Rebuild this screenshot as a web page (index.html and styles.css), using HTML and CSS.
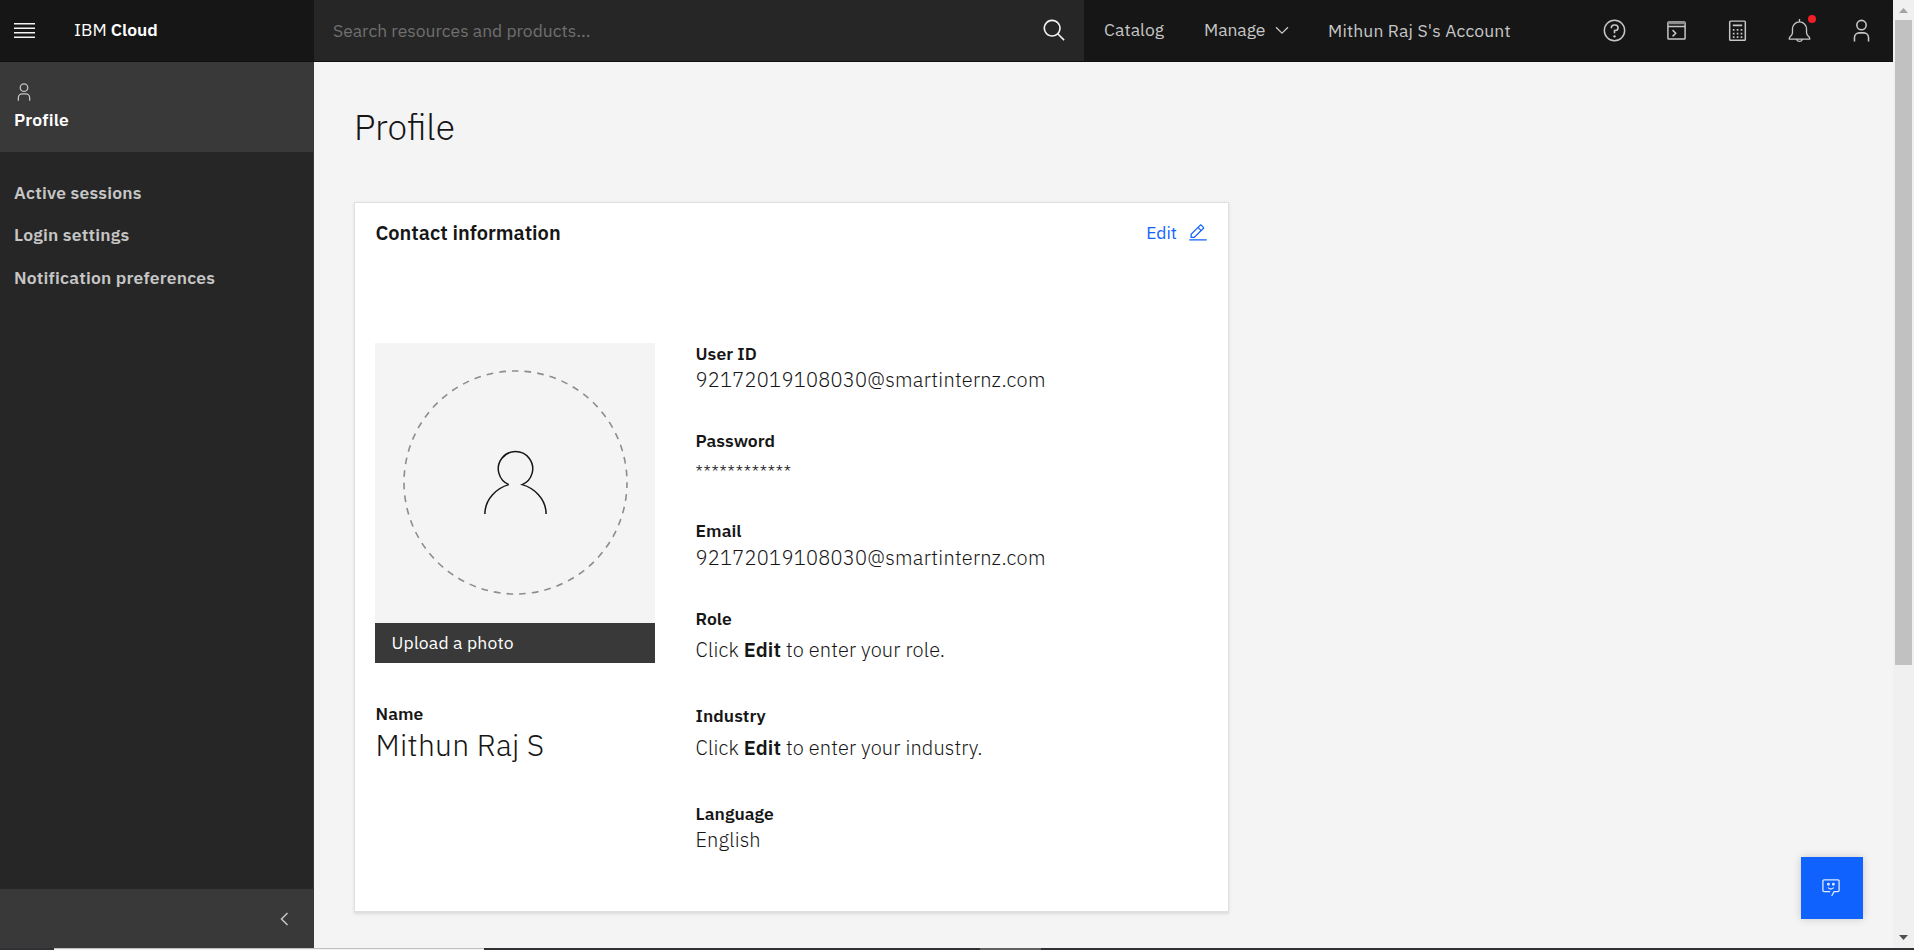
FILE: index.html
```html
<!DOCTYPE html>
<html lang="en">
<head>
<meta charset="utf-8">
<title>Profile - IBM Cloud</title>
<link rel="stylesheet" href="styles.css">
</head>
<body>
<div class="window">
  <div class="app">
    <header class="topbar">
      <div class="brand">
        <svg class="menu-icon" width="21" height="15" viewBox="0 0 21 15"><path d="M0 .75h21M0 5.25h21M0 9.75h21M0 14.25h21"/></svg>
        <span class="brand-name">IBM <b>Cloud</b></span>
      </div>
      <div class="search">
        <span class="search-text">Search resources and products...</span>
        <svg class="icon icon-search" width="25" height="25" viewBox="0 0 32 32"><path d="M29 27.586l-7.552-7.552a11.018 11.018 0 1 0-1.414 1.414L27.586 29zM4 13a9 9 0 1 1 9 9 9.01 9.01 0 0 1-9-9z"/></svg>
      </div>
      <nav class="top-links">
        <a class="link-catalog">Catalog</a>
        <a class="link-manage">Manage <svg class="chevron" width="14" height="9" viewBox="0 0 14 9"><path d="M1 1.2l6 6 6-6"/></svg></a>
        <a class="link-account">Mithun Raj S's Account</a>
      </nav>
      <div class="top-icons">
        <span class="top-cell"><svg class="icon" width="25" height="25" viewBox="0 0 32 32"><circle class="line" cx="16" cy="16" r="13"/><path d="M17 8h-1.500A4.490 4.490 0 0 0 11 12.500V13h2v-.5A2.500 2.500 0 0 1 15.500 10H17a2.500 2.500 0 0 1 0 5h-2v4.500h2V17a4.500 4.500 0 0 0 0-9z"/><circle cx="16" cy="23.500" r="1.500"/></svg></span>
        <span class="top-cell"><svg class="icon" width="25" height="25" viewBox="0 0 32 32"><rect class="line" x="5" y="5" width="22" height="22" rx="1"/><path class="band" d="M5 5h22v3H5z"/><path class="line" d="M5 11h22M11 15.500l4 4-4 4"/></svg></span>
        <span class="top-cell"><svg class="icon" width="25" height="25" viewBox="0 0 32 32"><rect class="line" x="6" y="4" width="20" height="24.500" rx="1"/><path d="M10 8.200h12v2.300H10zM10 14h2.200v2.200H10zM15 14h2.200v2.200H15zM20 14h2.200v2.200H20zM10 18.800h2.200V21H10zM15 18.800h2.200V21H15zM20 18.800h2.200V21H20zM10 23.500h2.200v2.200H10zM15 23.500h2.200v2.200H15zM20 23.500h2.200v2.200H20z"/></svg></span>
        <span class="top-cell"><svg class="icon" width="25" height="25" viewBox="0 0 32 32"><path class="line thin" d="M16 1.200V5M3 27v-1.500c0-1.800 4-2.500 4-6.500v-5a9 9 0 0 1 18 0v5c0 4 4 4.700 4 6.500V27zM12.500 27.500c.5 3.200 6.500 3.200 7 0"/></svg><i class="dot"></i></span>
        <span class="top-cell"><svg class="icon" width="25" height="25" viewBox="0 0 32 32"><path d="M16 4a5 5 0 1 1-5 5 5 5 0 0 1 5-5m0-2a7 7 0 1 0 7 7 7 7 0 0 0-7-7zM26 30h-2v-5a5 5 0 0 0-5-5h-6a5 5 0 0 0-5 5v5H6v-5a7 7 0 0 1 7-7h6a7 7 0 0 1 7 7z"/></svg></span>
      </div>
    </header>
    <div class="content">
      <aside class="sidebar">
        <div class="side-current">
          <svg class="icon" width="20" height="20" viewBox="0 0 32 32"><path d="M16 4a5 5 0 1 1-5 5 5 5 0 0 1 5-5m0-2a7 7 0 1 0 7 7 7 7 0 0 0-7-7zM26 30h-2v-5a5 5 0 0 0-5-5h-6a5 5 0 0 0-5 5v5H6v-5a7 7 0 0 1 7-7h6a7 7 0 0 1 7 7z"/></svg>
          <span>Profile</span>
        </div>
        <nav class="side-nav">
          <a class="side-link">Active sessions</a>
          <a class="side-link">Login settings</a>
          <a class="side-link">Notification preferences</a>
        </nav>
        <div class="side-collapse"><svg width="9" height="14" viewBox="0 0 9 14"><path d="M7.500 1L1.500 7l6 6"/></svg></div>
      </aside>
      <main class="main">
        <h1>Profile</h1>
        <section class="card">
          <div class="card-head">
            <h2>Contact information</h2>
            <a class="edit">Edit <svg width="20" height="20" viewBox="0 0 32 32"><path d="M2 26h28v2H2zM25.400 9c.8-.8.8-2 0-2.800l-3.600-3.600c-.8-.8-2-.8-2.800 0l-15 15V24h6.400zM20.400 4L24 7.600l-3 3L17.400 7zM6 22v-3.600l10-10 3.600 3.600-10 10z"/></svg></a>
          </div>
          <div class="card-body">
            <div class="person">
              <div class="photo">
                <svg width="280" height="280" viewBox="0 0 280 280">
                  <circle class="ring" cx="140.500" cy="139.500" r="111.500"/>
                  <path class="figure" d="M133.800 141.600a17.200 17.200 0 1 1 13.400 0c11.500 3.200 23.900 14 23.900 29.400M133.800 141.600c-11.500 3.200-23.900 14-23.900 29.400"/>
                </svg>
              </div>
              <div class="upload">Upload a photo</div>
              <div class="label name-label">Name</div>
              <div class="full-name">Mithun Raj S</div>
            </div>
            <dl class="fields">
              <div class="field field-id"><dt class="label">User ID</dt><dd class="address">92172019108030@smartinternz.com</dd></div>
              <div class="field field-password"><dt class="label">Password</dt><dd>************</dd></div>
              <div class="field field-email"><dt class="label">Email</dt><dd class="address">92172019108030@smartinternz.com</dd></div>
              <div class="field field-role"><dt class="label">Role</dt><dd>Click <b>Edit</b> to enter your role.</dd></div>
              <div class="field field-industry"><dt class="label">Industry</dt><dd>Click <b>Edit</b> to enter your industry.</dd></div>
              <div class="field field-language"><dt class="label">Language</dt><dd>English</dd></div>
            </dl>
          </div>
        </section>
      </main>
    </div>
    <button class="chat" aria-label="Chat"><svg width="20" height="20" viewBox="0 0 20 20"><path d="M8.200 13.700H2a1.100 1.100 0 0 1-1.100-1.100V3A1.100 1.100 0 0 1 2 1.900h14A1.100 1.100 0 0 1 17.100 3v9.600a1.100 1.100 0 0 1-1.100 1.100h-4L9.700 18M6 9.500c1.300 2 4.400 2 5.700 0"/><circle cx="6.400" cy="6.300" r=".8"/><circle cx="11.400" cy="6.300" r=".8"/></svg></button>
  </div>
  <div class="scrollbar">
    <svg width="9" height="5" viewBox="0 0 9 5"><path class="arrow-up" d="M4.500 0L9 5H0z"/></svg>
    <div class="thumb"></div>
    <svg width="9" height="5" viewBox="0 0 9 5"><path class="arrow-down" d="M0 0h9L4.500 5z"/></svg>
  </div>
</div>
<div class="taskbar"><div class="taskbar-active"></div><div class="taskbar-item"></div></div>
</body>
</html>
```
FILE: styles.css
```css
* { box-sizing: border-box; }

body {
  margin: 0;
  width: 1914px;
  height: 950px;
  overflow: hidden;
  background: #f4f4f4;
  color: #161616;
  font-family: "IBM Plex Sans", Roboto, sans-serif;
  font-size: 17.5px;
  line-height: 24px;
}

svg { display: block; flex: none; }

.window { display: flex; height: 948px; }
.app { position: relative; display: flex; flex-direction: column; width: 1893px; }

/* Top bar */
.topbar { display: flex; height: 62px; background: #161616; border-bottom: 1px solid #110d12; color: #c6c6c6; }
.icon { fill: #c6c6c6; }
.icon .line { fill: none; stroke: #c6c6c6; stroke-width: 1.9; }
.icon .thin { stroke-width: 1.7; }
.icon .band { fill: #8d8d8d; }

.brand { display: flex; align-items: center; width: 314px; padding-left: 14px; color: #fff; }
.menu-icon { stroke: #f3f3f3; stroke-width: 1.5; }
.brand-name { margin: -2px 0 0 39px; white-space: nowrap; }
.brand-name b { font-weight: 600; }

.search { display: flex; align-items: center; justify-content: space-between; width: 770px; padding: 0 17px 0 19px; background: #262626; color: #6f6f6f; }
.icon-search { fill: #f3f3f3; margin-top: -1px; }

.top-links { display: flex; align-items: center; padding-left: 20px; width: 500px; white-space: nowrap; }
.link-catalog { width: 100px; margin-top: -2px; letter-spacing: 0.1px; }
.link-manage { display: flex; align-items: center; gap: 10px; width: 124px; margin-top: -2px; letter-spacing: -0.05px; }
.link-account { letter-spacing: 0.17px; margin-top: 1px; }
.chevron { fill: none; stroke: #c6c6c6; stroke-width: 1.3; margin-top: 1px; }

.top-icons { display: flex; }
.top-cell { position: relative; display: flex; align-items: center; justify-content: center; width: 61.6px; }
.dot { position: absolute; left: 39px; top: 15px; width: 8px; height: 8px; border-radius: 50%; background: #ee1f26; }

/* Side navigation */
.content { display: flex; flex: 1; min-height: 0; }
.sidebar { display: flex; flex-direction: column; width: 314px; background: #262626; border-right: 1px solid #393939; }
.side-current { height: 90px; padding: 20px 0 0 14px; background: #393939; color: #fff; font-weight: 600; letter-spacing: 0.2px; }
.side-current svg { margin-bottom: 6px; }
.side-nav { display: flex; flex-direction: column; flex: 1; padding: 20px 0 0 14px; }
.side-link { line-height: 42.300px; color: #c6c6c6; font-weight: 600; letter-spacing: 0.21px; }
.side-collapse { display: flex; align-items: center; justify-content: flex-end; height: 59px; padding-right: 24px; background: #393939; }
.side-collapse svg { fill: none; stroke: #c6c6c6; stroke-width: 1.5; }

/* Main area */
.main { flex: 1; padding: 43px 0 0 40px; }
h1 { margin: 0 0 53px; font-size: 35.500px; line-height: 44px; font-weight: 300; }

.card { width: 875px; height: 711px; padding: 18px 20px 0; background: #fff; border: 1px solid #dfdfdf; border-bottom-width: 2px; box-shadow: 0 1px 3px rgba(0, 0, 0, 0.1); }
.card-head { display: flex; justify-content: space-between; height: 24px; }
h2 { margin: 0; padding-left: 0.5px; font-size: 20px; line-height: 24px; font-weight: 600; }
.edit { display: flex; align-items: center; gap: 11px; color: #0f62fe; }
.edit svg { fill: #0f62fe; }

.card-body { display: flex; gap: 40.500px; padding-top: 98px; }
.person { width: 280px; }
.photo { height: 280px; background: #f4f4f4; }
.ring { fill: none; stroke: #8d8d8d; stroke-width: 1.600; stroke-dasharray: 6.700 6.038; stroke-dashoffset: 1; }
.figure { fill: none; stroke: #161616; stroke-width: 1.500; }
.upload { height: 40px; padding-left: 16.500px; background: #393939; color: #fff; line-height: 40px; letter-spacing: 0.2px; }
.label { font-weight: 600; line-height: 24px; letter-spacing: 0.05px; }
.name-label { margin-top: 39px; }
.name-label, .full-name { padding-left: 0.5px; }
.full-name { font-size: 30px; font-weight: 300; line-height: 38px; letter-spacing: 0.3px; }

.fields { margin: -1px 0 0; }
.field dd { margin: 0; font-size: 20px; font-weight: 300; line-height: 28px; letter-spacing: 0.14px; }
.field dd b { font-weight: 600; }
.field .address { letter-spacing: 0.27px; }
.field-password { margin-top: 35px; }
.field-password dd { padding-top: 5px; font-size: 17.500px; letter-spacing: 0.750px; }
.field-email { margin-top: 33px; }
.field-email dd { padding-top: 1px; }
.field-role { margin-top: 35px; }
.field-role dd { padding-top: 5px; }
.field-industry { margin-top: 40px; }
.field-industry dd { padding-top: 6px; }
.field-language { margin-top: 40px; }

.chat { position: absolute; right: 30px; bottom: 29px; display: flex; align-items: center; justify-content: center; width: 62px; height: 62px; padding: 0; border: 0; background: #0f62fe; box-shadow: 0 0 8px rgba(0, 0, 0, 0.18); }
.chat svg { fill: none; stroke: #e0eaff; stroke-width: 1.300; }
.chat circle { fill: #e0eaff; }

/* Window scrollbar */
.scrollbar { display: flex; flex-direction: column; align-items: center; width: 21px; padding: 8px 0; background: #f0f0f0; }
.thumb { width: 17px; height: 645px; margin: 7px 0 270px; background: #c1c1c1; }
.arrow-up { fill: #a3a3a3; }
.arrow-down { fill: #505050; }

/* Edge of the desktop taskbar */
.taskbar { display: flex; gap: 496px; height: 2px; padding-left: 54px; background: #303134; }
.taskbar-active { width: 430px; background: #f3f3f3; border-top: 1px solid #c0c0c0; }
.taskbar-item { width: 61px; background: #616161; }
```
